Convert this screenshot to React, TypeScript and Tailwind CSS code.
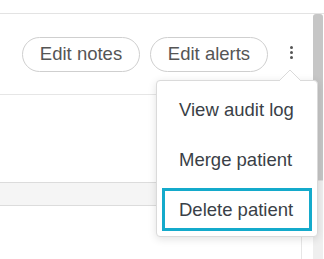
import React from "react";

export default function App() {
  return (
    <div
      className="relative w-[324px] h-[259px] overflow-hidden bg-white"
      style={{ fontFamily: '"Liberation Sans", Arial, sans-serif' }}
    >
      <div className="h-[14px] border-b border-[#e3e3e3]" />
      <div className="flex h-[245px]">
        <div className="flex-1 flex flex-col">
          <div className="h-[81px] border-b border-[#e6e6e6] flex items-start pt-[23px] pl-[22px]">
            <button className="w-[118px] h-[35px] rounded-full border border-[#cfcfcf] text-[18.5px] text-[#555] flex items-center justify-center leading-none">
              Edit notes
            </button>
            <button className="ml-[10px] w-[118px] h-[35px] rounded-full border border-[#cfcfcf] text-[18.5px] text-[#555] flex items-center justify-center leading-none">
              Edit alerts
            </button>
            <div className="ml-[22px] mt-[9px] flex flex-col gap-[2px]">
              <span className="block w-[3px] h-[3px] rounded-full bg-[#555]" />
              <span className="block w-[3px] h-[3px] rounded-full bg-[#555]" />
              <span className="block w-[3px] h-[3px] rounded-full bg-[#555]" />
            </div>
          </div>
          <div className="h-[87px]" />
          <div className="h-[24px] border-y border-[#dcdcdc] bg-[#f5f5f5]" />
          <div className="flex-1 flex">
            <div className="w-[302px] border-r border-[#e6e6e6]" />
          </div>
        </div>
        <div className="w-[11px] flex flex-col">
          <div className="w-[10px] h-[166px] bg-[#c6c6c6] rounded-t-[3px]" />
          <div className="w-[10px] flex-1 bg-[#efefef] border-t border-[#dcdcdc]" />
        </div>
      </div>

      {/* Dropdown menu */}
      <div className="absolute left-[156px] top-[80px] w-[162px] h-[157px] bg-white border border-[#dadada] rounded-[4px] shadow-[0_2px_8px_rgba(0,0,0,0.12)] pt-[7px] px-[5px] flex flex-col gap-[7px]">
        <div className="h-[43px] flex items-center pl-[17px] text-[18.5px] text-[#3a3f47]">
          View audit log
        </div>
        <div className="h-[43px] flex items-center pl-[17px] text-[18.5px] text-[#3a3f47]">
          Merge patient
        </div>
        <div className="h-[43px] flex items-center pl-[14px] text-[18.5px] text-[#3a3f47] border-[3px] border-[#14aacb]">
          Delete patient
        </div>
      </div>
      <svg
        className="absolute left-[279px] top-[69px]"
        width="22"
        height="13"
        viewBox="0 0 22 13"
      >
        <polygon points="0,12 11,1 22,12" fill="white" />
        <polyline points="0,12 11,1 22,12" fill="none" stroke="#dadada" strokeWidth="1" />
        <rect x="0" y="12" width="22" height="1" fill="white" />
      </svg>
    </div>
  );
}
